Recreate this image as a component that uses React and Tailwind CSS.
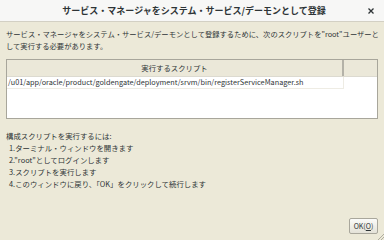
export default function App() {
  const steps = [
    "1.ターミナル・ウィンドウを開きます",
    "2.\"root\"としてログインします",
    "3.スクリプトを実行します",
    "4.このウィンドウに戻り、「OK」をクリックして続行します",
  ];
  return (
    <div
      className="w-[384px] h-[240px] bg-[#ece9d8] flex flex-col relative overflow-hidden text-[#2e3436]"
      style={{ fontFamily: '"Noto Sans CJK JP", "Noto Sans", sans-serif' }}
    >
      {/* title bar */}
      <div className="h-[22px] bg-[#f7f7f6] border-b border-[#d3d0c4] flex items-center justify-center relative shrink-0">
        <span className="text-[9px] font-bold leading-none pl-[4px]">サービス・マネージャをシステム・サービス/デーモンとして登録</span>
        <svg className="absolute right-[10px] top-[8px]" width="6" height="6" viewBox="0 0 6 6">
          <path d="M0.5 0.5 L5.5 5.5 M5.5 0.5 L0.5 5.5" stroke="#2e3436" strokeWidth="1.3" />
        </svg>
      </div>

      <div className="flex flex-col px-[6px] pt-[6px] flex-1">
        <p className="text-[7.3px] leading-[12px] whitespace-nowrap">
          サービス・マネージャをシステム・サービス/デーモンとして登録するために、次のスクリプトを"root"ユーザーと<br />
          して実行する必要があります。
        </p>

        <div className="mt-[7px] h-[60px] border border-[#a8a69b] bg-white flex flex-col">
          <div className="flex h-[17px] bg-[#ebe8d9] border-b border-[#dcdad0]">
            <div className="w-[337px] border-r-2 border-[#b4b2a8] flex items-center justify-center text-[7.4px]">
              実行するスクリプト
            </div>
          </div>
          <div className="w-[337px] h-[12px] border-r border-b border-[#eeece4] flex items-center pl-px text-[7.3px] leading-none whitespace-nowrap">
            /u01/app/oracle/product/goldengate/deployment/srvm/bin/registerServiceManager.sh
          </div>
        </div>

        <div className="mt-[11px] text-[7.4px] leading-[12px]">
          <p>構成スクリプトを実行するには:</p>
          {steps.map((s) => (
            <p key={s} className="pl-[3px]">{s}</p>
          ))}
        </div>

        <div className="flex-1" />
        <div className="flex justify-end pb-[6px]">
          <button className="w-[29px] h-[16px] rounded-[2px] border border-[#a9a79c] bg-gradient-to-b from-[#fbfbf9] to-[#e4e2d8] text-[7px] leading-none flex items-center justify-center text-[#2e3436]">
            OK(<span className="underline">O</span>)
          </button>
        </div>
      </div>

      <svg className="absolute right-0 bottom-0" width="7" height="7" viewBox="0 0 7 7">
        <path d="M7 1 L1 7 M7 4 L4 7" stroke="#b0ad9f" strokeWidth="1" />
      </svg>
    </div>
  );
}
